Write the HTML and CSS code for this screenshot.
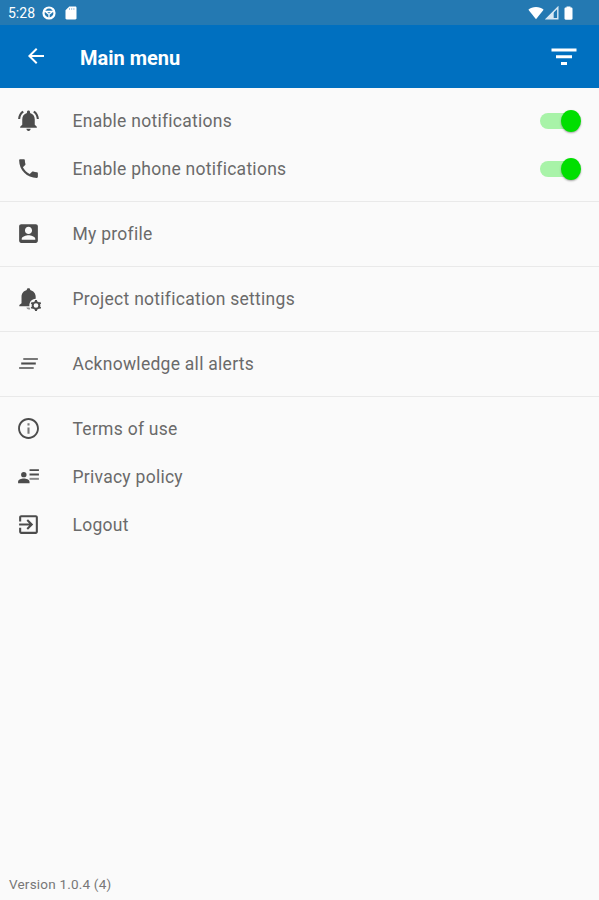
FILE: index.html
```
<!DOCTYPE html>
<html lang="en">
<head>
    <meta charset="UTF-8">
    <meta name="viewport" content="width=device-width, initial-scale=1.0">
    <title>Main menu</title>
    <link rel="stylesheet" href="styles.css">
</head>
<body>
    <div class="status-bar">
        <span class="time">5:28</span>
        <svg class="status-wheel" width="14" height="14" viewBox="0 0 14 14">
            <circle cx="7" cy="7" r="5.500" fill="none" stroke="#fff" stroke-width="2.200"/>
            <path d="M2 5.500h10M4 6l3 2.500L10 6M7 8v4" fill="none" stroke="#fff" stroke-width="1.300"/>
        </svg>
        <svg class="status-card" width="12" height="14" viewBox="0 0 12 14">
            <path d="M4.300.5h6c.7 0 1.200.5 1.200 1.200v10.600c0 .7-.5 1.200-1.200 1.200H1.700c-.7 0-1.200-.5-1.200-1.200v-8z" fill="#fff"/>
            <path d="M4.500 2.200v1.600M6.700 2.200v1.600M8.900 2.200v1.600" stroke="#8db9d9" stroke-width="1"/>
        </svg>
        <div class="status-right">
            <svg width="16" height="14" viewBox="0 0 16 14"><path d="M8 13.200.4 3.800C2.300 2 5 1 8 1s5.700 1 7.600 2.800z" fill="#fff"/></svg>
            <svg width="14" height="14" viewBox="0 0 14 14">
                <path d="M1.500 12.700 12.800 1.400v11.300z" fill="none" stroke="#d8e8f3" stroke-width="1.400"/>
                <path d="M1 13 8.700 5.300V13z" fill="#d8e8f3"/>
            </svg>
            <svg class="battery" width="9" height="14" viewBox="0 0 9 14"><path d="M2.500 1.500V.4h4v1.100h.8c.7 0 1.200.5 1.200 1.200v9.800c0 .7-.5 1.200-1.200 1.200H1.700c-.7 0-1.200-.5-1.200-1.200V2.700c0-.7.5-1.200 1.200-1.200z" fill="#fff"/></svg>
        </div>
    </div>

    <header class="toolbar">
        <svg class="back" width="24" height="24" viewBox="0 0 24 24"><path d="M20 11H7.830l5.590-5.590L12 4l-8 8 8 8 1.410-1.410L7.830 13H20v-2z"/></svg>
        <h1 class="title">Main menu</h1>
        <svg class="filter" width="26" height="18" viewBox="0 0 26 18"><path d="M.5.500h25v3H.5zM5 7.300h16v3H5zM10 14h6v3h-6z"/></svg>
    </header>

    <main class="menu">
        <section class="group">
            <div class="item">
                <svg class="icon" viewBox="0 0 24 24"><path d="M7.580 4.080 6.150 2.650C3.750 4.480 2.170 7.300 2.030 10.500h2c.15-2.650 1.510-4.970 3.550-6.420zm12.390 6.420h2c-.15-3.200-1.730-6.020-4.120-7.850l-1.420 1.430c2.020 1.450 3.390 3.770 3.540 6.420zM18 11c0-3.070-1.640-5.640-4.500-6.320V4c0-.83-.67-1.500-1.500-1.500s-1.500.67-1.500 1.500v.68C7.630 5.360 6 7.920 6 11v5l-2 2v1h16v-1l-2-2v-5zm-6 11c.14 0 .27-.01.4-.04.65-.14 1.180-.58 1.440-1.180.1-.24.15-.5.15-.78h-4c.01 1.100.9 2 2.010 2z"/></svg>
                <span class="label">Enable notifications</span>
                <span class="switch"><span class="thumb"></span></span>
            </div>
            <div class="item">
                <svg class="icon" viewBox="0 0 24 24"><path d="M6.620 10.790c1.440 2.830 3.760 5.140 6.590 6.590l2.200-2.200c.27-.27.67-.36 1.020-.24 1.120.37 2.330.57 3.570.57.55 0 1 .45 1 1V20c0 .55-.45 1-1 1-9.390 0-17-7.610-17-17 0-.55.45-1 1-1h3.500c.55 0 1 .45 1 1 0 1.250.2 2.450.57 3.570.11.35.03.74-.25 1.020l-2.200 2.200z"/></svg>
                <span class="label">Enable phone notifications</span>
                <span class="switch"><span class="thumb"></span></span>
            </div>
        </section>

        <section class="group">
            <div class="item">
                <svg class="icon" viewBox="0 0 24 24"><path d="M3 5v14c0 1.100.89 2 2 2h14c1.100 0 2-.9 2-2V5c0-1.100-.9-2-2-2H5c-1.110 0-2 .9-2 2zm12.400 4c0 1.900-1.500 3.400-3.400 3.400S8.600 10.900 8.600 9s1.500-3.400 3.400-3.400 3.400 1.500 3.400 3.400zM5.500 17c0-2 4.300-3.300 6.500-3.300s6.500 1.300 6.500 3.300v1h-13v-1z"/></svg>
                <span class="label">My profile</span>
            </div>
        </section>

        <section class="group">
            <div class="item">
                <svg class="icon" viewBox="0 0 24 24">
                    <path d="M12 1.800c-.9 0-1.600.7-1.600 1.500v.6C7.400 4.700 5.300 7.200 5.300 10.300v6.200L3.200 18.300v1.200h9.700c-.5-4 2-7 6-7.300v-1.900c0-3.100-2.300-5.600-5.300-6.400v-.6c0-.8-.7-1.500-1.600-1.500z"/>
                    <path d="M10 20.700h3l.8 1.500c-1.700.8-3.400.2-3.800-1.500z" opacity=".6"/>
                    <circle cx="19.200" cy="18.700" r="3.200" fill="none" stroke="#4c4c4c" stroke-width="1.900"/>
                    <path d="M19.200 13.500v2M19.200 21.900v2M14.700 16.100l1.700 1M22 20.300l1.700 1M14.700 21.300l1.700-1M22 17.100l1.700-1" stroke="#4c4c4c" stroke-width="2"/>
                </svg>
                <span class="label">Project notification settings</span>
            </div>
        </section>

        <section class="group">
            <div class="item">
                <svg class="icon" viewBox="0 0 24 24">
                    <path d="M5 11h14v2H5z"/>
                    <path d="M3 15.300h14v1.900H3zM7 6.800h14v1.900H7z" opacity=".75"/>
                </svg>
                <span class="label">Acknowledge all alerts</span>
            </div>
        </section>

        <section class="group">
            <div class="item">
                <svg class="icon" viewBox="0 0 24 24"><path d="M11 7h2v2h-2zm0 4h2v6h-2z" opacity=".75"/><path d="M12 2C6.480 2 2 6.480 2 12s4.480 10 10 10 10-4.480 10-10S17.520 2 12 2zm0 18.200c-4.500 0-8.200-3.700-8.200-8.200s3.700-8.200 8.200-8.200 8.200 3.700 8.200 8.200-3.700 8.200-8.200 8.200z"/></svg>
                <span class="label">Terms of use</span>
            </div>
            <div class="item">
                <svg class="icon" viewBox="0 0 24 24">
                    <circle cx="7.500" cy="10.200" r="2.600"/>
                    <path d="M2 18.500v-1.400c0-2.200 3.200-3.100 5.500-3.100s5.500.9 5.500 3.100v1.400zM13 5h9v1.800h-9zM13 9.200h9V11h-9z"/>
                    <path d="M13 13.300h9v1.900h-9z" opacity=".65"/>
                </svg>
                <span class="label">Privacy policy</span>
            </div>
            <div class="item">
                <svg class="icon" viewBox="0 0 24 24"><path d="M10.090 15.590 11.500 17l5-5-5-5-1.410 1.410L12.670 11H3v2h9.670l-2.580 2.590zM19 3H5c-1.110 0-2 .9-2 2v4h2V5h14v14H5v-4H3v4c0 1.100.89 2 2 2h14c1.100 0 2-.9 2-2V5c0-1.100-.9-2-2-2z"/></svg>
                <span class="label">Logout</span>
            </div>
        </section>
    </main>

    <footer class="version">Version 1.0.4 (4)</footer>
</body>
</html>
```
FILE: styles.css
```
* {
    box-sizing: border-box;
}

body {
    display: flex;
    flex-direction: column;
    height: 100vh;
    margin: 0;
    background-color: #fafafa;
    font-family: Roboto, sans-serif;
    overflow: hidden;
}

svg {
    display: block;
    flex: none;
}

.status-bar {
    display: flex;
    align-items: center;
    height: 25px;
    padding: 0 26px 0 8px;
    background-color: #2479b2;
    color: #fff;
}

.time {
    width: 34px;
    padding-top: 1px;
    font-size: 14px;
    line-height: 24px;
}

.status-card {
    margin-left: 9px;
}

.status-right {
    display: flex;
    align-items: center;
    margin-left: auto;
    gap: 1px;
}

.battery {
    margin-left: 4px;
}

.toolbar {
    display: flex;
    align-items: center;
    height: 63px;
    margin-bottom: 1px;
    padding: 0 22px 0 24px;
    background-color: #0070c0;
    color: #fff;
    fill: #fff;
}

.back {
    margin-bottom: 1px;
}

.title {
    margin: 2px auto 0 32px;
    font-size: 20px;
    font-weight: 700;
    line-height: 24px;
}

.menu {
    flex: 1;
}

.group {
    padding: 8px 0;
    border-bottom: 1px solid #e9e9e9;
}

.group:last-child {
    border-bottom: none;
}

.item {
    display: flex;
    align-items: center;
    height: 48px;
    padding: 0 18px 0 16px;
}

.icon {
    width: 25px;
    height: 25px;
    margin-bottom: 1px;
    fill: #4c4c4c;
}

.label {
    flex: 1;
    margin-left: 31.5px;
    color: #6a6a6a;
    font-size: 17.5px;
    letter-spacing: 0.27px;
}

.switch {
    display: flex;
    align-items: center;
    justify-content: flex-end;
    width: 41px;
    height: 16px;
    border-radius: 8px;
    background: linear-gradient(to right, #a8f3a8 30px, transparent 30px);
}

.thumb {
    width: 20px;
    height: 22px;
    border-radius: 50%;
    background-color: #00df00;
    box-shadow: 0 1px 2px rgba(0, 0, 0, 0.35);
}

.version {
    padding: 0 9px 8px;
    color: #777;
    font-size: 13.5px;
    letter-spacing: 0.2px;
    line-height: 16px;
}
```
